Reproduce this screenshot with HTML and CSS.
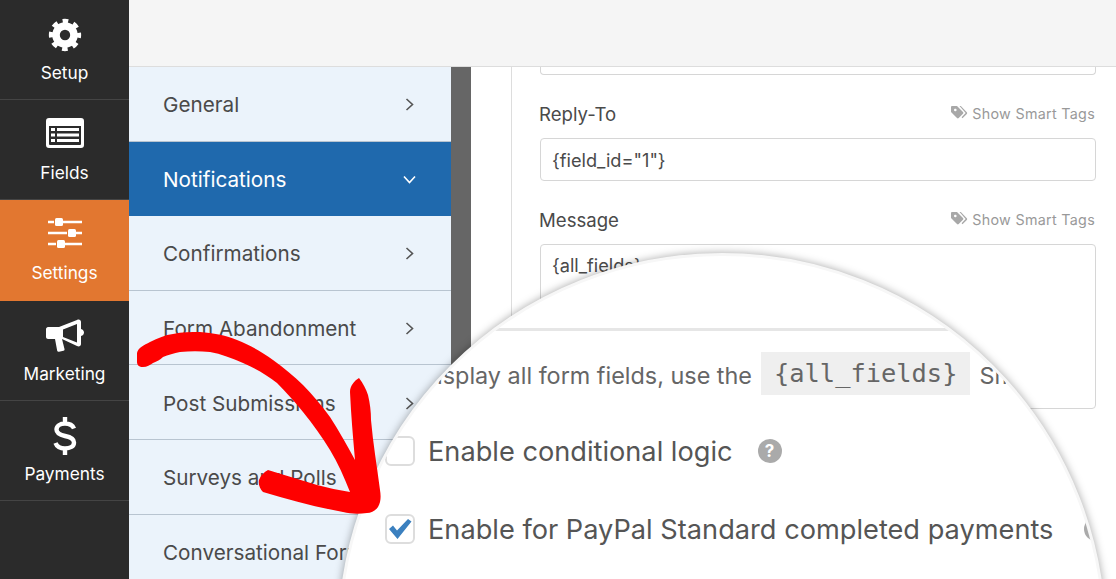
FILE: index.html
```html
<!DOCTYPE html>
<html lang="en">
<head>
  <meta charset="UTF-8" />
  <title>Form Settings</title>
  <link rel="stylesheet" href="styles.css">
</head>
<body>
  <div class="stage">
    <div class="app">
      <nav class="sidebar">
        <a class="side-item">
          <svg class="side-icon" width="34" height="34" viewBox="0 0 36 36">
            <circle cx="18" cy="18" r="9.5" fill="none" stroke="#fff" stroke-width="8" />
            <circle cx="18" cy="18" r="14.6" fill="none" stroke="#fff" stroke-width="5" stroke-dasharray="5.9 5.57" stroke-dashoffset="2.95" />
          </svg>
          <span>Setup</span>
        </a>
        <a class="side-item">
          <svg class="side-icon" width="38" height="30" viewBox="0 0 38 30">
            <path fill="#fff" fill-rule="evenodd" d="M3 0h32a3 3 0 0 1 3 3v24a3 3 0 0 1-3 3H3a3 3 0 0 1-3-3V3a3 3 0 0 1 3-3zM3 8v18a1 1 0 0 0 1 1h30a1 1 0 0 0 1-1V8z" />
            <path fill="#fff" d="M5 10h4v3H5zM11 10h22v3H11zM5 15.500h4v3H5zM11 15.500h22v3H11zM5 21h4v3H5zM11 21h22v3H11z" />
          </svg>
          <span>Fields</span>
        </a>
        <a class="side-item active">
          <svg class="side-icon" width="34" height="32" viewBox="0 0 34 32">
            <path stroke="#fff" stroke-width="2.4" d="M0 4h6M15 4h19M0 15h19M27 15h7M0 26h8M17 26h17" />
            <rect x="7" y="0" width="8" height="8" rx="1.500" fill="#fff" />
            <rect x="20" y="11" width="8" height="8" rx="1.500" fill="#fff" />
            <rect x="9" y="22" width="8" height="8" rx="1.500" fill="#fff" />
          </svg>
          <span>Settings</span>
        </a>
        <a class="side-item">
          <svg class="side-icon" width="38" height="33" viewBox="0 0 38 33">
            <path fill="#fff" fill-rule="evenodd" d="M2 8h11L31 1c2-1 4 0 4 2v7c2 .5 3 2 3 3.500s-1 3-3 3.500v8c0 2-2 3-4 2L16 20l2.500 10c.2 1-.2 1.500-1 1.800l-4.500 1c-1 .2-1.500-.2-1.800-1L9 20H2c-1 0-2-1-2-2v-8c0-1 1-2 2-2zM17 10.500v7.500l14 5.500V5z" />
          </svg>
          <span>Marketing</span>
        </a>
        <a class="side-item pay">
          <svg class="side-icon" width="24" height="38" viewBox="0 0 24 38">
            <path fill="none" stroke="#fff" stroke-width="4.400" d="M12 0v6M12 32v6M21 11.500C19.500 8 16 6.500 12 6.500 7 6.500 3.500 9 3.500 12.500c0 4 4 5.500 8.500 6.500 5 1 9 2.500 9 6.500 0 4-4 6-9 6-4.500 0-8-1.500-9.500-5.500" />
          </svg>
          <span>Payments</span>
        </a>
      </nav>

      <div class="main">
        <header class="topbar"></header>
        <div class="main-body">
          <ul class="submenu">
            <li>General <svg class="chev" width="9" height="13" viewBox="0 0 9 13"><path d="M1.500 1l6 5.500-6 5.500" /></svg></li>
            <li class="active">Notifications <svg class="chev" width="13" height="9" viewBox="0 0 13 9"><path d="M1 1.500l5.500 6 5.500-6" /></svg></li>
            <li>Confirmations <svg class="chev" width="9" height="13" viewBox="0 0 9 13"><path d="M1.500 1l6 5.500-6 5.500" /></svg></li>
            <li>Form Abandonment <svg class="chev" width="9" height="13" viewBox="0 0 9 13"><path d="M1.500 1l6 5.500-6 5.500" /></svg></li>
            <li>Post Submissions <svg class="chev" width="9" height="13" viewBox="0 0 9 13"><path d="M1.500 1l6 5.500-6 5.500" /></svg></li>
            <li>Surveys and Polls <svg class="chev" width="9" height="13" viewBox="0 0 9 13"><path d="M1.500 1l6 5.500-6 5.500" /></svg></li>
            <li>Conversational Forms <svg class="chev" width="9" height="13" viewBox="0 0 9 13"><path d="M1.500 1l6 5.500-6 5.500" /></svg></li>
          </ul>
          <div class="strip"></div>
          <section class="content">
            <div class="panel">
              <div class="input input-cut"></div>

              <div class="field-head">
                <label>Reply-To</label>
                <span class="smart-tags">
                  <svg width="17" height="14" viewBox="0 0 17 14"><path fill="#a8a8a8" d="M0 1.200C0 .5.500 0 1.200 0H6l6 6c.5.5.5 1.200 0 1.700l-4.300 4.300c-.5.5-1.200.5-1.700 0L0 6zM3 4a1.300 1.300 0 1 0 0-.1zM8.500 0h1.300l6 6.200c.5.5.5 1.200 0 1.700l-4.300 4.300-.9-.9 4-4.200z" /></svg>
                  Show Smart Tags
                </span>
              </div>
              <div class="input">{field_id="1"}</div>

              <div class="field-head">
                <label>Message</label>
                <span class="smart-tags">
                  <svg width="17" height="14" viewBox="0 0 17 14"><path fill="#a8a8a8" d="M0 1.200C0 .5.500 0 1.200 0H6l6 6c.5.5.5 1.200 0 1.700l-4.300 4.300c-.5.5-1.200.5-1.700 0L0 6zM3 4a1.300 1.300 0 1 0 0-.1zM8.500 0h1.300l6 6.200c.5.5.5 1.200 0 1.700l-4.300 4.300-.9-.9 4-4.200z" /></svg>
                  Show Smart Tags
                </span>
              </div>
              <div class="input textarea">{all_fields}</div>
            </div>
          </section>
        </div>
      </div>
    </div>

    <!-- magnifier over the form -->
    <div class="lens">
      <div class="lens-line"></div>
      <div class="lens-note">
        <span class="note-text"><span>To display all form fields, use the</span></span>
        <code>{all_fields}</code>
        <span>Smart Tag</span>
      </div>
      <div class="lens-row first">
        <span class="check"></span>
        <span>Enable conditional logic</span>
        <span class="help">?</span>
      </div>
      <div class="lens-row">
        <span class="check">
          <svg width="24" height="22" viewBox="0 0 24 22"><path fill="#3b80bf" d="M1 11l4-3.500 4 5L20 1l3.500 2.500L9.500 21z" /></svg>
        </span>
        <span>Enable for PayPal Standard completed payments</span>
        <span class="help far">?</span>
      </div>
    </div>

    <svg class="arrow" width="1116" height="579" viewBox="0 0 1116 579">
      <path fill="#fe0000" d="M137 353C138 348 144 345 150 342C158 338 165 335 173 334C182 332 191 332 200 332C213 333 225 335 237 340C250 345 262 352 273 360C284 368 294 376 303 385C313 395 322 406 330 417C339 431 347 445 355 460C353 437 351 415 350 392C350 386 354 381 359 378C363 383 366 389 368 395C370 403 371 412 371 420C373 443 377 467 380 490C381 496 381 502 378 507C375 511 371 513 367 513C359 514 351 514 343 512C316 507 289 500 263 492C260 489 258 484 259 480C261 475 264 472 268 470C284 475 301 480 317 485C328 488 339 490 350 492C344 477 338 463 330 450C322 437 313 424 303 412C295 402 286 392 277 383C267 375 255 368 243 363C232 358 221 354 210 352C200 351 190 351 180 352C174 353 168 355 163 357C160 360 157 361 153 363C150 365 147 367 143 367C139 367 137 365 137 362Z" />
    </svg>
  </div>
</body>
</html>
```

FILE: styles.css
```css
* {
  box-sizing: border-box;
}

html,
body {
  margin: 0;
  height: 100%;
  overflow: hidden;
}

body {
  font-family: Inter, "Liberation Sans", sans-serif;
  color: #4a4a4a;
  background: #fff;
}

.stage {
  position: relative;
  height: 579px;
  overflow: hidden;
}

.app {
  display: flex;
  height: 579px;
}

/* left nav */
.sidebar {
  width: 129px;
  flex-shrink: 0;
  background: #2b2b2b;
}

.side-item {
  display: flex;
  flex-direction: column;
  align-items: center;
  height: 100.2px;
  border-bottom: 1px solid #444;
  color: #fff;
  font-size: 17.3px;
  position: relative;
}

.side-item span {
  position: absolute;
  top: 62px;
}

.side-icon {
  margin-top: 18px;
}

.side-item.pay .side-icon {
  margin-top: 16px;
}

.side-item.active {
  background: #e27730;
  border-bottom: none;
}

/* main area */
.main {
  flex: 1;
  display: flex;
  flex-direction: column;
  min-width: 0;
}

.topbar {
  height: 67px;
  flex-shrink: 0;
  background: #f5f5f5;
  border-bottom: 1px solid #ddd;
}

.main-body {
  flex: 1;
  display: flex;
  min-height: 0;
  overflow: hidden;
}

.submenu {
  list-style: none;
  margin: 0;
  padding: 0;
  width: 322px;
  flex-shrink: 0;
  background: #ebf3fb;
}

.submenu li {
  display: flex;
  align-items: center;
  justify-content: space-between;
  height: 74.6px;
  padding: 2px 37px 0 34px;
  border-bottom: 1px solid #b8c4d0;
  font-size: 20.7px;
  white-space: nowrap;
}

.submenu li.active {
  background: #1f69ad;
  color: #fff;
  padding-right: 35px;
  border-bottom: none;
}

.chev {
  fill: none;
  stroke: #555;
  stroke-width: 1.6;
  flex-shrink: 0;
}

.active .chev {
  stroke: #fff;
}

.strip {
  width: 20px;
  flex-shrink: 0;
  background: #666;
}

.content {
  flex: 1;
  padding-left: 40px;
  min-width: 0;
}

.panel {
  height: 100%;
  border-left: 1px solid #ddd;
  padding: 0 20px 0 28px;
}

.input {
  height: 43px;
  padding: 0 11px;
  display: flex;
  align-items: center;
  border: 1px solid #d6d6d6;
  border-radius: 4px;
  font-size: 18.2px;
}

.input-cut {
  height: 8px;
  border-top: none;
  border-radius: 0 0 4px 4px;
}

.textarea {
  height: 165px;
  align-items: flex-start;
  padding-top: 9px;
}

.field-head {
  display: flex;
  align-items: center;
  justify-content: space-between;
  margin-top: 26px;
  margin-bottom: 13px;
  height: 24px;
}

.field-head label {
  font-size: 18.6px;
  margin-left: -1px;
  padding-top: 2px;
}

.smart-tags {
  display: flex;
  align-items: center;
  gap: 4px;
  padding-right: 1px;
  font-size: 14.3px;
  color: #999;
  letter-spacing: .3px;
}

/* magnifier */
.lens {
  position: absolute;
  left: 338px;
  top: 253px;
  width: 768px;
  height: 768px;
  border-radius: 50%;
  background: #fff;
  border: 3px solid #f7f7f7;
  box-shadow: 0 0 9px rgba(0, 0, 0, .35);
  overflow: hidden;
  font-size: 27.2px;
  white-space: nowrap;
}

.lens-line {
  height: 3px;
  margin-top: 72px;
  background: #e6e6e6;
}

.lens-note {
  display: flex;
  align-items: center;
  gap: 9px;
  margin-top: 21px;
  height: 43px;
  font-size: 23.4px;
  color: #666;
}

.note-text {
  width: 411px;
  flex-shrink: 0;
  display: flex;
  justify-content: flex-end;
  padding-top: 4px;
}

.lens-note > span:last-child {
  padding-top: 4px;
}

.lens-note code {
  font-family: "DejaVu Sans Mono", monospace;
  font-size: 25.400px;
  background: #efefef;
  height: 43px;
  line-height: 43px;
  padding: 0 13px;
  color: #666;
}

.lens-row {
  display: flex;
  align-items: center;
  gap: 13px;
  height: 30px;
  margin-top: 48px;
  padding-left: 44px;
  color: #555;
}

.lens-row.first {
  margin-top: 41px;
}

.check {
  display: flex;
  align-items: center;
  justify-content: center;
  flex-shrink: 0;
  width: 30px;
  height: 30px;
  border: 2px solid #ddd;
  border-radius: 6px;
}

.help {
  display: flex;
  align-items: center;
  justify-content: center;
  flex-shrink: 0;
  width: 24px;
  height: 24px;
  margin-left: 12px;
  border-radius: 50%;
  background: #aaa;
  color: #fff;
  font-size: 17px;
  font-weight: 700;
}

.help.far {
  margin-left: 18px;
}

.arrow {
  position: absolute;
  left: 0;
  top: 0;
  pointer-events: none;
}
```
